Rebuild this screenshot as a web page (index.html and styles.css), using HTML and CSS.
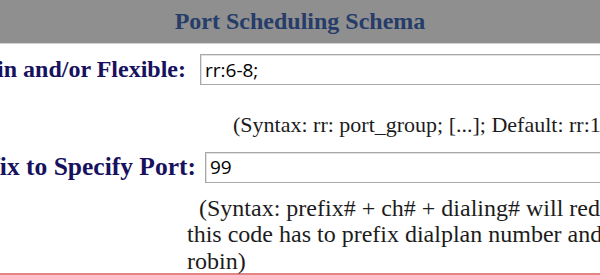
FILE: index.html
```html
<!DOCTYPE html>
<html lang="en">
<head>
  <meta charset="UTF-8" />
  <title>Port Scheduling Schema</title>
  <link rel="stylesheet" href="styles.css">
</head>
<body>
  <div class="panel">
    <div class="panelHeader">Port Scheduling Schema</div>

    <div class="fieldRow rowSchema">
      <div class="fieldLabel"><span>Round Robin and/or Flexible:</span></div>
      <input class="fieldInput" type="text" value="rr:6-8;" />
    </div>
    <div class="fieldNote noteSchema">(Syntax: rr: port_group; [...]; Default: rr:1-8;)</div>

    <div class="fieldRow rowPrefix">
      <div class="fieldLabel"><span>Prefix to Specify Port:</span></div>
      <input class="fieldInput" type="text" value="99" />
    </div>
    <div class="fieldNote notePrefix">
      &nbsp;&nbsp;(Syntax: prefix# + ch# + dialing# will redirect the call to the specified port;<br>
      this code has to prefix dialplan number and is not applicable to round<br>
      robin)
    </div>
  </div>
</body>
</html>
```

FILE: styles.css
```css
body {
  margin: 0;
  overflow: hidden;
  background: #fff;
  font-family: "Liberation Serif", "Times New Roman", serif;
}

.panel {
  width: 600px;
  border-bottom: 2px solid #e38585;
}

.panelHeader {
  height: 43px;
  line-height: 42px;
  background: #8f8f8f;
  border-bottom: 1px solid #d2d2d2;
  color: #263c69;
  font-size: 24px;
  font-weight: bold;
  text-align: center;
}

.fieldRow {
  display: flex;
  align-items: center;
}

.fieldLabel {
  display: flex;
  justify-content: flex-end;
  white-space: nowrap;
  color: #17115e;
  font-size: 24px;
  font-weight: bold;
}

.fieldInput {
  flex: none;
  width: 520px;
  height: 31px;
  box-sizing: border-box;
  margin: 0;
  padding: 0 4px;
  border: 1px solid #a8a8a8;
  box-shadow: inset 1px 1px 0 #e2e2e2;
  font-family: "Open Sans", "Noto Sans", sans-serif;
  font-size: 19px;
  color: #000;
  outline: none;
}

.rowSchema {
  margin-top: 10px;
}

.rowSchema .fieldLabel {
  width: 186px;
  margin-right: 14px;
}

.rowPrefix {
  margin-top: 13px;
}

.rowPrefix .fieldLabel {
  width: 196px;
  margin-right: 9px;
  font-size: 25.5px;
}

.fieldNote {
  white-space: nowrap;
  color: #1c1c1c;
  font-size: 22px;
  line-height: 26.5px;
}

.noteSchema {
  margin-top: 27px;
  padding-left: 233px;
}

.notePrefix {
  height: 78px;
  margin-top: 12px;
  padding-left: 187px;
  font-size: 24px;
}
```
